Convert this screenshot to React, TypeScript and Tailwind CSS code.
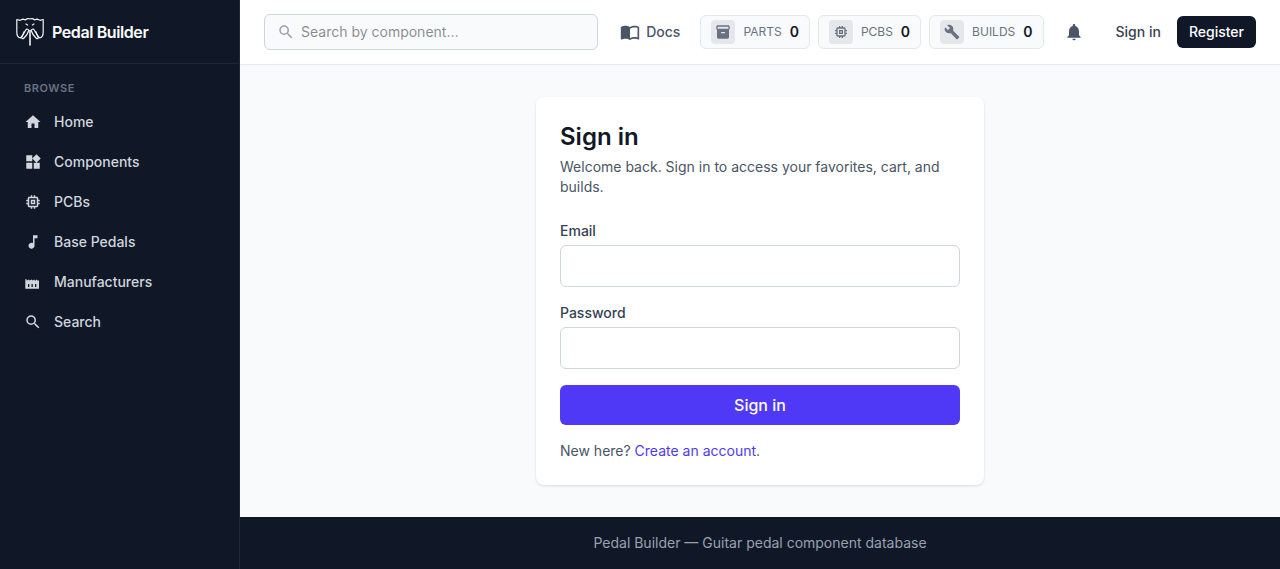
import { useState } from 'react'
import type { IconType } from 'react-icons'
import {
  MdBuild,
  MdHome,
  MdImportContacts,
  MdInventory2,
  MdMemory,
  MdMusicNote,
  MdNotifications,
  MdSearch,
  MdWidgets,
} from 'react-icons/md'

function FactoryIcon({ className }: { className?: string }) {
  return (
    <svg className={className} viewBox="0 0 18 18" fill="currentColor" aria-hidden="true">
      <path
        fillRule="evenodd"
        d="M1.3 15.8V6.2H2.7V7.6L5.2 6.6V7.6L8 6.6V7.6L10.700 6.600V7.600H12V6.800H13.300V7.600H15V15.800zM4 11v3h1.300v-3zm3.500 0v3h1.300v-3zm3.500 0v3h1.300v-3z"
      />
    </svg>
  )
}

function Logo() {
  return (
    <svg
      className="size-7 text-gray-100"
      viewBox="0 0 28 28"
      fill="none"
      stroke="currentColor"
      strokeWidth="1.2"
      strokeLinejoin="round"
      strokeLinecap="round"
      aria-hidden="true"
    >
      {/* ears and crown */}
      <path d="M8.200 13.500C7 17 6 19 4.200 20 2 19.500.8 17 .8 14V1.500L4 2.300 7 1.100 9.500 1.800C11 .2 12.500.8 14 .8s3-.6 4.500 1L21 1.100 24 2.300 27.200 1.500V14c0 3-1.200 5.500-3.400 6-1.800-1-2.800-3-4-6.500" />
      {/* tusks */}
      <path d="M12.800 12.500c-.3-1.500-2.300-1.800-3.200-.3L6 18.500c-.8 2 .5 3 2 1.500 2-2 4-4.500 4.800-7.500z" />
      <path d="M15.200 12.500c.3-1.500 2.300-1.800 3.200-.3L22 18.500c.8 2-.5 3-2 1.500-2-2-4-4.500-4.800-7.500z" />
      <path d="M14 12.500V27" strokeWidth="1.600" />
      <path d="M10 6l1.600 1M18 6l-1.600 1" />
    </svg>
  )
}

const NAV: { label: string; icon: IconType | typeof FactoryIcon }[] = [
  { label: 'Home', icon: MdHome },
  { label: 'Components', icon: MdWidgets },
  { label: 'PCBs', icon: MdMemory },
  { label: 'Base Pedals', icon: MdMusicNote },
  { label: 'Manufacturers', icon: FactoryIcon },
  { label: 'Search', icon: MdSearch },
]

const COUNTERS = [
  { label: 'Parts', count: 0, icon: MdInventory2 },
  { label: 'PCBs', count: 0, icon: MdMemory },
  { label: 'Builds', count: 0, icon: MdBuild },
]

function Sidebar() {
  return (
    <aside className="w-60 shrink-0 border-r border-gray-800 bg-gray-900">
      <div className="flex h-16 items-center border-b border-gray-800 px-4">
        <a href="#" className="flex items-center gap-2 font-semibold tracking-tight text-white">
          <Logo />
          Pedal Builder
        </a>
      </div>
      <nav className="px-3 py-4">
        <p className="mb-2 px-3 text-[11px] leading-4 font-semibold tracking-wider text-gray-500 uppercase">Browse</p>
        <ul className="space-y-1">
          {NAV.map(({ label, icon: Icon }) => (
            <li key={label}>
              <a
                href="#"
                className="flex items-center gap-3 rounded-md px-3 py-2 text-sm font-medium text-gray-300 hover:bg-gray-800"
              >
                <Icon className="size-[18px]" />
                {label}
              </a>
            </li>
          ))}
        </ul>
      </nav>
    </aside>
  )
}

function Header() {
  const [query, setQuery] = useState('')

  return (
    <header className="flex items-center gap-3 border-b border-gray-200 bg-white px-6 py-3.5">
      <label className="flex h-9 min-w-0 flex-1 items-center gap-1.5 rounded-md border border-gray-300 bg-gray-50 px-3">
        <MdSearch className="size-[18px] shrink-0 text-gray-400" />
        <input
          type="search"
          aria-label="Search by component"
          value={query}
          onChange={(e) => setQuery(e.target.value)}
          placeholder="Search by component…"
          className="w-full bg-transparent text-sm text-gray-900 outline-none placeholder:text-gray-900/50"
        />
      </label>
      <div className="flex shrink-0 items-center gap-2">
        <a href="#" className="mr-3 flex items-center gap-1.5 pl-2.5 text-sm font-medium text-gray-600">
          <MdImportContacts className="size-5" />
          Docs
        </a>
        {COUNTERS.map(({ label, count, icon: Icon }) => (
          <a
            key={label}
            href="#"
            className="flex items-center gap-2 rounded-md border border-gray-200 bg-gray-50 px-2.5 py-1 text-gray-500"
          >
            <span className="flex size-6 items-center justify-center rounded bg-gray-200">
              <Icon className="size-4" />
            </span>
            <span className="text-xs uppercase">{label}</span>
            <span className="text-sm font-semibold text-gray-900">{count}</span>
          </a>
        ))}
        <button type="button" aria-label="Notifications" className="ml-1 p-2 text-gray-600">
          <MdNotifications className="size-5" />
        </button>
      </div>
      <div className="flex shrink-0 items-center gap-1 text-sm font-medium">
        <a href="#" className="px-3 py-1.5 text-gray-700">
          Sign in
        </a>
        <a href="#" className="rounded-md bg-gray-900 px-3 py-1.5 text-white">
          Register
        </a>
      </div>
    </header>
  )
}

function SignInCard() {
  return (
    <div className="w-full max-w-md rounded-lg bg-white p-6 shadow-sm">
      <h1 className="text-2xl font-semibold text-gray-900">Sign in</h1>
      <p className="mt-1 text-sm text-gray-600">
        Welcome back. Sign in to access your favorites, cart, and builds.
      </p>
      <form className="mt-6 space-y-4" onSubmit={(e) => e.preventDefault()}>
        <div>
          <label htmlFor="email" className="block text-sm font-medium text-gray-700">
            Email
          </label>
          <input
            id="email"
            type="email"
            className="mt-1 block w-full rounded-md border border-gray-300 px-3 py-2 text-gray-900"
          />
        </div>
        <div>
          <label htmlFor="password" className="block text-sm font-medium text-gray-700">
            Password
          </label>
          <input
            id="password"
            type="password"
            className="mt-1 block w-full rounded-md border border-gray-300 px-3 py-2 text-gray-900"
          />
        </div>
        <button type="submit" className="w-full rounded-md bg-indigo-600 px-4 py-2 font-medium text-white">
          Sign in
        </button>
      </form>
      <p className="mt-4 text-sm text-gray-600">
        New here?{' '}
        <a href="#" className="text-indigo-600">
          Create an account
        </a>
        .
      </p>
    </div>
  )
}

export default function App() {
  return (
    <div className="flex min-h-screen bg-gray-50 font-['Inter',sans-serif] text-gray-900">
      <Sidebar />
      <div className="flex min-w-0 flex-1 flex-col">
        <Header />
        <main className="flex flex-1 items-start justify-center px-4 py-8">
          <SignInCard />
        </main>
        <footer className="bg-gray-900 px-4 py-4 text-center text-sm text-gray-400">
          Pedal Builder — Guitar pedal component database
        </footer>
      </div>
    </div>
  )
}
